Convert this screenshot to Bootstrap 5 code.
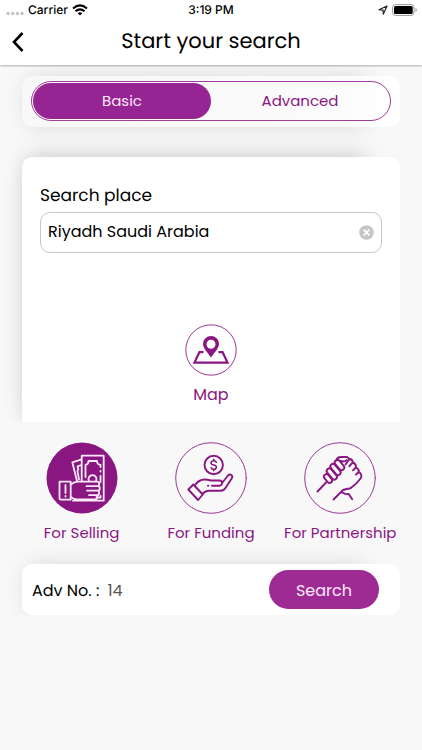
<!DOCTYPE html>
<html lang="en">
<head>
<meta charset="utf-8">
<meta name="viewport" content="width=device-width, initial-scale=1">
<title>Start your search</title>
<link href="https://cdn.jsdelivr.net/npm/bootstrap@5.3.0/dist/css/bootstrap.min.css" rel="stylesheet">
<style>
:root { --plum: #8a1681; --violet: #962593; }
body { font-family: Poppins, Inter, sans-serif; font-size: 16px; line-height: 24px; background: #f8f8f8; color: #000; text-rendering: geometricPrecision; }
main { isolation: isolate; }
.status { font-family: Inter, "Liberation Sans", sans-serif; font-size: 12px; line-height: 20px; font-weight: 500; }
.status > * { flex: 1 1 0; }
.topbar { box-shadow: 0 1px 2px rgba(0,0,0,.3); position: relative; z-index: 2; }
.title-row { height: 45px; display: grid; grid-template-columns: 40px 1fr 40px; padding-bottom: 2px; }
.title-row h1 { font-size: 21px; line-height: 32px; font-weight: 400; }
.back { width: 36px; height: 40px; }
.panel { border-radius: 10px; position: relative; }
.panel::before { content: ""; position: absolute; z-index: -1; inset: 2px 34px 2px 6px; border-radius: 10px; box-shadow: 0 0 22px 2px rgba(0,0,0,.22); }
.tab-panel { background: linear-gradient(90deg, #f8f8f8, #fbfbfb 80%, #fff); padding: 5px 9px 6px; margin: 11px 22px 0; }
.tab-panel::before, .adv::before { box-shadow: 0 0 22px 2px rgba(0,0,0,.12); }
.tabs { border: 1px solid #a03c9c; border-radius: 20px; padding: 1px; height: 40px; }
.tabs .btn { border: 0; border-radius: 18px; padding: 1px 0 0; font-size: 15px; color: var(--plum); flex: 1 1 0; }
.tabs .btn.active { background: var(--violet); color: #fbe9fa; }
.scroller { overflow: hidden; padding: 30px 22px 0; }
.place { height: 265px; padding: 26px 18px 0 18px; }
.panel.place { border-radius: 10px 10px 0 0; }
.place label { font-size: 17px; }
.field { height: 41px; border: 1px solid #c8c8c8; border-radius: 10px; margin-top: 5px; padding: 0 7px; }
.field input { font-size: 16px; color: #000; min-width: 0; padding: 0 0 2px; }
.pick { color: var(--plum); background: none; border: 0; padding: 0; font-size: 16px; line-height: 24px; white-space: nowrap; }
.map { margin-top: 71px; }
.map svg, .kinds svg { display: block; margin: 0 auto; }
.map span { margin-top: 7px; }
.kinds { padding: 20px 17px 0; }
.kinds .pick { flex: 1 1 0; width: 0; display: flex; flex-direction: column; align-items: center; font-size: 15px; }
.kinds span { margin-top: 7px; }
.adv { margin: 19px 22px 0; padding: 6px 21px 6px 10px; height: 51px; }
.adv input { width: 80px; color: #555; font-size: 16px; }
.adv label { font-size: 16px; }
.adv label, .adv input { padding-top: 3px; }
.go { width: 110px; height: 39px; border-radius: 20px; background: #9e2a93; color: #fbe9fa; font-size: 16px; padding: 2px 0 0; border: 0; }
</style>
</head>
<body>
<header class="topbar bg-white">
  <div class="status d-flex justify-content-between px-1">
    <div class="d-flex align-items-center gap-1">
      <svg width="20" height="12" viewBox="0 0 20 12" fill="#c4c4c4" aria-hidden="true"><circle cx="4" cy="9.500" r="1.700"/><circle cx="8.700" cy="9.500" r="1.700"/><circle cx="13.400" cy="9.500" r="1.700"/><circle cx="18" cy="9.500" r="1.700"/></svg>
      <span>Carrier</span>
      <svg width="16" height="12" viewBox="0 0 16 12" fill="none" stroke="#000" stroke-width="2.100" aria-hidden="true"><path d="M1 4.500Q8-1.800 15 4.500M3.500 7.200q4.500-3.800 9 0"/><path d="M5.700 9.200q2.300-1.700 4.600 0L8 11.600z" fill="#000" stroke="none"/></svg>
    </div>
    <div class="text-center">3:19 PM</div>
    <div class="d-flex align-items-center justify-content-end gap-1">
      <svg width="10" height="10" viewBox="0 0 10 10" fill="none" stroke="#222" stroke-width="1.200" stroke-linejoin="round" aria-hidden="true"><path d="M9 1 1 4.700l4 .4.400 4z"/></svg>
      <svg width="26" height="12" viewBox="0 0 26 12" aria-hidden="true"><rect x=".6" y=".6" width="21.500" height="10.800" rx="3" fill="none" stroke="#999"/><rect x="2" y="2" width="18.700" height="8" rx="1.600"/><path d="M23.500 4v4q1.300-.7 1.300-2t-1.300-2" fill="#999"/></svg>
    </div>
  </div>
  <div class="title-row align-items-center">
    <button class="back btn p-0 border-0" type="button" aria-label="Back"><svg width="14" height="20" viewBox="0 0 14 20" fill="none" stroke="#000" stroke-width="2.600" aria-hidden="true"><path d="M11.500 1 3 10l8.500 9"/></svg></button>
    <h1 class="text-center m-0">Start your search</h1>
  </div>
</header>

<main>
  <div class="panel tab-panel">
    <div class="tabs d-flex">
      <button class="btn active" type="button">Basic</button>
      <button class="btn" type="button">Advanced</button>
    </div>
  </div>

  <div class="scroller">
    <section class="panel place bg-white">
      <label for="place" class="d-block">Search place</label>
      <div class="field d-flex align-items-center">
        <input id="place" class="border-0 bg-transparent flex-grow-1" type="text" value="Riyadh Saudi Arabia">
        <button class="btn p-0 border-0 d-flex" type="button" aria-label="Clear"><svg width="15" height="15" viewBox="0 0 15 15" aria-hidden="true"><circle cx="7.500" cy="7.500" r="7.300" fill="#c6c6c6"/><path d="m4.700 4.700 5.600 5.600m0-5.600-5.600 5.600" stroke="#fff" stroke-width="1.700"/></svg></button>
      </div>
      <button class="pick map d-block mx-auto" type="button">
        <svg width="52" height="52" viewBox="0 0 52 52" aria-hidden="true"><circle cx="26" cy="26" r="25.200" fill="#fff" stroke="#9b3a96"/><path d="M18.500 28.200h-4.100L9.500 38.600h33L37.600 28.200h-4.100" fill="none" stroke="#8a1681" stroke-width="2.200"/><path fill="#8a1681" fill-rule="evenodd" d="M26 12a8 8 0 0 0-8 8c0 4 4.500 8.500 8 13.500 3.500-5 8-9.500 8-13.500a8 8 0 0 0-8-8m0 3.800a4.500 4.500 0 1 1 0 9 4.500 4.500 0 0 1 0-9"/></svg>
        <span class="d-block">Map</span>
      </button>
    </section>
  </div>

  <div class="kinds d-flex">
    <button class="pick" type="button">
      <svg width="72" height="72" viewBox="0 0 72 72" fill="none" stroke="#fbeafa" stroke-width="1.800" stroke-linejoin="round" stroke-linecap="round" aria-hidden="true">
        <circle cx="36" cy="36" r="35.500" fill="#8a1681" stroke="none"/>
        <path d="M35.700 39V13.700h22v45H27M35.700 17.300l-9.400 3L31 39M35.500 23l-4 1.300q1.500 2.500 0 5l1.500 8"/>
        <path d="M39.500 35V23q3-.5 3-4h8.500q0 3.500 3.500 4v2M54.500 29v.5M54.500 34v6M54.500 54v1.500h-4M43 39a4 4 0 1 1 7 0"/>
        <path d="M13.500 39.700h11.200v18H15q-1.500 0-1.500-1.500zM19.500 43v8M19.500 54v.5"/>
        <path d="M24.700 42.500q3.500-2.800 7.500-2.800H51a2.200 2.200 0 0 1 0 4.500H40.500M51.500 44.200a2.200 2.200 0 0 1 0 4.500H41M51 48.700a2.200 2.200 0 0 1 0 4.400h-8M49 53.100a2.200 2.200 0 0 1 0 4.400H31q-3 0-6.300-2.500"/>
      </svg>
      <span>For Selling</span>
    </button>
    <button class="pick" type="button">
      <svg width="72" height="72" viewBox="0 0 72 72" fill="none" stroke="#8a1681" stroke-width="1.900" stroke-linejoin="round" stroke-linecap="round" aria-hidden="true">
        <circle cx="36" cy="36" r="35.300" stroke="#9b3a96" stroke-width="1"/>
        <circle cx="38.700" cy="23" r="9.200"/>
        <path d="M41.300 20.300q-.3-1.600-2.600-1.600t-2.600 2 2.600 2.300 2.600 2.400-2.600 2-2.600-1.700M38.700 17.300v1.400m0 8.700v1.400" stroke-width="1.600"/>
        <path d="m13.300 47.500 5-5 9.500 10-4.700 5.500z"/>
        <path d="M19.500 43.500q4.500-6 10-6 3 0 6.500 1h8.500a2.600 2.600 0 0 1 0 5.200h-7.500M33 43.700h.3M47 41l6-7.500q1.700-1.700 3.400-.5 1.600 1.300.4 3.200l-6 9.300q-1.800 3.200-5 3.200H34q-4 0-6.500 3.300"/>
      </svg>
      <span>For Funding</span>
    </button>
    <button class="pick" type="button">
      <svg width="72" height="72" viewBox="0 0 72 72" fill="none" stroke="#8a1681" stroke-width="1.900" stroke-linejoin="round" stroke-linecap="round" aria-hidden="true">
        <circle cx="36" cy="36" r="35.300" stroke="#9b3a96" stroke-width="1"/>
        <path d="m13.500 49.500 8.500-9"/>
        <g><rect x="-5" y="-2.500" width="10" height="5" rx="2.500" transform="translate(24 36.500) rotate(50)"/><rect x="-6.500" y="-2.600" width="13" height="5.200" rx="2.600" transform="translate(27.800 32) rotate(50)"/><rect x="-6.500" y="-2.600" width="13" height="5.200" rx="2.600" transform="translate(31.500 27.500) rotate(50)"/><rect x="-6" y="-2.600" width="12" height="5.200" rx="2.600" transform="translate(35.500 23) rotate(50)"/></g>
        <path d="M32.500 18.500q0-3.500 5-3.500h5.500l2.500 2-4 5.500M36.500 19q4 1.500 6-1M45.500 17q3 0 3.300 3.500l-3.500 3.700M48.800 20.500q3.700 1.500 3 5L49 28.300M51.800 25.500q3.500 1.500 3 4.500L52 32.500M54.500 29.500q4 3 2.500 6.500-4 5.500-10.500 10.300-4 .5-7.500 1.700l-9.500 9.500M37.700 50.200q3.500 2.500 7 1.800l3.500 5.300"/>
      </svg>
      <span>For Partnership</span>
    </button>
  </div>

  <form class="panel adv bg-white d-flex align-items-center">
    <label for="adv">Adv No. :</label>
    <input id="adv" class="border-0 bg-transparent pe-0 ps-0 pb-0 ms-2" type="text" value="14">
    <button class="go btn ms-auto" type="button">Search</button>
  </form>
</main>
<script src="https://cdn.jsdelivr.net/npm/bootstrap@5.3.0/dist/js/bootstrap.bundle.min.js"></script>
</body>
</html>
